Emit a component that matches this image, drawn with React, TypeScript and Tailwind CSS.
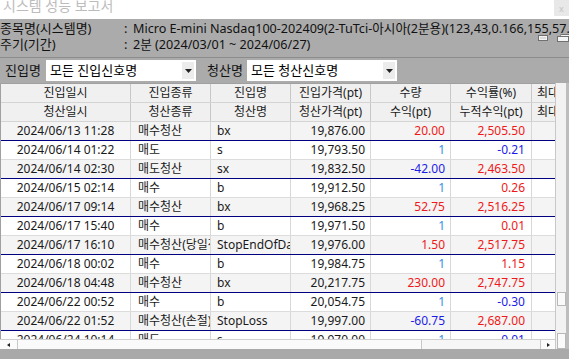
import React from "react";

type Row = {
  d: string;
  k: string;
  n: string;
  p: string;
  q: string;
  r: string;
  exit: boolean;
  qc: string;
  rc: string;
};

const R = "text-[#f01818]";
const B = "text-[#1c1ce8]";
const Q = "text-[#3a8ee6]";

const rows: Row[] = [
  { d: "2024/06/13 11:28", k: "매수청산", n: "bx", p: "19,876.00", q: "20.00", r: "2,505.50", exit: true, qc: R, rc: R },
  { d: "2024/06/14 01:22", k: "매도", n: "s", p: "19,793.50", q: "1", r: "-0.21", exit: false, qc: Q, rc: B },
  { d: "2024/06/14 02:30", k: "매도청산", n: "sx", p: "19,832.50", q: "-42.00", r: "2,463.50", exit: true, qc: B, rc: R },
  { d: "2024/06/15 02:14", k: "매수", n: "b", p: "19,912.50", q: "1", r: "0.26", exit: false, qc: Q, rc: R },
  { d: "2024/06/17 09:14", k: "매수청산", n: "bx", p: "19,968.25", q: "52.75", r: "2,516.25", exit: true, qc: R, rc: R },
  { d: "2024/06/17 15:40", k: "매수", n: "b", p: "19,971.50", q: "1", r: "0.01", exit: false, qc: Q, rc: R },
  { d: "2024/06/17 16:10", k: "매수청산(당일청산)", n: "StopEndOfDay", p: "19,976.00", q: "1.50", r: "2,517.75", exit: true, qc: R, rc: R },
  { d: "2024/06/18 00:02", k: "매수", n: "b", p: "19,984.75", q: "1", r: "1.15", exit: false, qc: Q, rc: R },
  { d: "2024/06/18 04:48", k: "매수청산", n: "bx", p: "20,217.75", q: "230.00", r: "2,747.75", exit: true, qc: R, rc: R },
  { d: "2024/06/22 00:52", k: "매수", n: "b", p: "20,054.75", q: "1", r: "-0.30", exit: false, qc: Q, rc: B },
  { d: "2024/06/22 01:52", k: "매수청산(손절)", n: "StopLoss", p: "19,997.00", q: "-60.75", r: "2,687.00", exit: true, qc: B, rc: R },
  { d: "2024/06/24 10:14", k: "매도", n: "s", p: "19,970.00", q: "1", r: "-0.01", exit: false, qc: Q, rc: B },
];

function HeaderRow({ labels }: { labels: string[] }) {
  return (
    <div className="flex h-[19px] shrink-0 border-b border-[#d4d4d4] bg-[#f0f0f0] text-[#1a1a1a]">
      <div className="w-[130px] shrink-0 border-r border-[#c8c8c8] text-center leading-[18px]">{labels[0]}</div>
      <div className="w-[80px] shrink-0 border-r border-[#c8c8c8] text-center leading-[18px]">{labels[1]}</div>
      <div className="w-[80px] shrink-0 border-r border-[#c8c8c8] text-center leading-[18px]">{labels[2]}</div>
      <div className="w-[80px] shrink-0 border-r border-[#c8c8c8] text-center leading-[18px]">{labels[3]}</div>
      <div className="w-[80px] shrink-0 border-r border-[#c8c8c8] text-center leading-[18px]">{labels[4]}</div>
      <div className="w-[81px] shrink-0 border-r border-[#c8c8c8] text-center leading-[18px]">{labels[5]}</div>
      <div className="w-[60px] shrink-0 overflow-hidden whitespace-nowrap pl-[5px] leading-[18px]">{labels[6]}</div>
    </div>
  );
}

function DataRow({ row }: { row: Row }) {
  return (
    <div
      className={`flex h-[19px] shrink-0 border-b ${
        row.exit ? "bg-[#f4f4f4] border-[#000080]" : "bg-white border-[#dcdcdc]"
      } text-[#1a1a1a]`}
    >
      <div className="w-[130px] shrink-0 border-r border-[#d8d8d8] text-center leading-[18px] whitespace-nowrap">{row.d}</div>
      <div className="w-[80px] shrink-0 border-r border-[#d8d8d8] pl-[7px] leading-[18px] whitespace-nowrap overflow-hidden">{row.k}</div>
      <div className="w-[80px] shrink-0 border-r border-[#d8d8d8] pl-[6px] leading-[18px] whitespace-nowrap overflow-hidden">{row.n}</div>
      <div className="w-[80px] shrink-0 border-r border-[#d8d8d8] pr-[5px] text-right leading-[18px] whitespace-nowrap">{row.p}</div>
      <div className={`w-[80px] shrink-0 border-r border-[#d8d8d8] pr-[5px] text-right leading-[18px] whitespace-nowrap ${row.qc}`}>{row.q}</div>
      <div className={`w-[81px] shrink-0 border-r border-[#d8d8d8] pr-[6px] text-right leading-[18px] whitespace-nowrap ${row.rc}`}>{row.r}</div>
      <div className="w-[60px] shrink-0" />
    </div>
  );
}

function Combo({ text }: { text: string }) {
  return (
    <div className="flex h-[21px] w-[150px] items-center justify-between bg-white pl-[4px] pr-[2px]">
      <span className="text-[13px] leading-none text-black whitespace-nowrap">{text}</span>
      <span className="flex h-[17px] w-[12px] items-center justify-center bg-[#ececec]">
        <svg width="7" height="4" viewBox="0 0 7 4">
          <path d="M0 0 H7 L3.5 4 Z" fill="#222" />
        </svg>
      </span>
    </div>
  );
}

export default function App() {
  return (
    <div className="relative flex h-[359px] w-[569px] flex-col overflow-hidden bg-[#a9a9a9] font-['Noto_Sans','Noto_Sans_CJK_KR',sans-serif] text-[12px]">
      {/* title bar */}
      <div className="flex h-[19px] shrink-0 items-start justify-between overflow-hidden bg-white">
        <span className="-mt-[1px] pl-[3px] text-[14px] leading-[14px] text-[#bcbcbc] whitespace-nowrap">시스템 성능 보고서</span>
        <span className="flex h-[16px] w-[15px] items-center justify-center bg-[#e8e8e8] text-[9px] leading-none text-[#c4c4c4]">x</span>
      </div>

      {/* info */}
      <div className="relative h-[39px] shrink-0 overflow-hidden border-b border-[#8c8c8c] bg-[#ababab] pt-[2px] text-[13px] text-[#111]">
        <div className="flex h-[16px] items-center whitespace-nowrap">
          <span className="w-[124px] shrink-0">종목명(시스템명)</span>
          <span className="w-[9px] shrink-0">:</span>
          <span className="text-[12.6px]">Micro E-mini Nasdaq100-202409(2-TuTci-아시아(2분용)(123,43,0.166,155,57.75,0)</span>
        </div>
        <div className="flex h-[16px] items-center whitespace-nowrap">
          <span className="w-[124px] shrink-0">주기(기간)</span>
          <span className="w-[9px] shrink-0">:</span>
          <span className="text-[12.6px]">2분 (2024/03/01 ~ 2024/06/27)</span>
        </div>
        <div className="absolute right-0 top-[15px] flex items-center gap-[9px]">
          <svg width="10" height="6" viewBox="0 0 10 6">
            <rect x="0.5" y="0.5" width="9" height="5" fill="#f4f4f4" stroke="#707070" />
            <rect x="2" y="2" width="6" height="2" fill="#dcdcdc" />
          </svg>
          <svg width="12" height="8" viewBox="0 0 12 8">
            <rect x="0.5" y="2.5" width="11" height="5" fill="#f4f4f4" stroke="#707070" />
            <rect x="4" y="0.5" width="8" height="2" fill="#f4f4f4" stroke="#707070" />
          </svg>
        </div>
      </div>

      {/* filter bar */}
      <div className="flex h-[25px] shrink-0 items-start bg-[#ababab] pt-[2px] text-[13px] text-[#111]">
        <span className="w-[46px] shrink-0 pl-[5px] leading-[21px]">진입명</span>
        <Combo text="모든 진입신호명" />
        <span className="w-[51px] shrink-0 pl-[11px] leading-[21px]">청산명</span>
        <Combo text="모든 청산신호명" />
      </div>

      {/* table + scrollbars */}
      <div className="flex h-[266px] shrink-0">
        <div className="flex w-[555px] shrink-0 flex-col">
          <div className="flex h-[256px] flex-col overflow-hidden border-l border-t border-[#a0a0a0] bg-white">
            <HeaderRow labels={["진입일시", "진입종류", "진입명", "진입가격(pt)", "수량", "수익률(%)", "최대수익(pt)"]} />
            <HeaderRow labels={["청산일시", "청산종류", "청산명", "청산가격(pt)", "수익(pt)", "누적수익(pt)", "최대손실(pt)"]} />
            {rows.map((r, i) => (
              <DataRow key={i} row={r} />
            ))}
          </div>
          {/* horizontal scrollbar */}
          <div className="flex h-[10px] shrink-0 border-t border-[#cfcfcf] bg-[#f6f6f6]">
            <div className="flex w-[18px] items-center justify-center border-r border-[#c8c8c8] bg-[#fbfbfb]">
              <svg width="3" height="4" viewBox="0 0 3 4">
                <path d="M3 0 V4 L0 2 Z" fill="#222" />
              </svg>
            </div>
            <div className="w-[404px] border-r border-[#c8c8c8] bg-[#fafafa]" />
            <div className="flex-1" />
            <div className="flex w-[15px] items-center justify-center border-l border-[#c8c8c8] bg-[#fbfbfb]">
              <svg width="3" height="4" viewBox="0 0 3 4">
                <path d="M0 0 V4 L3 2 Z" fill="#222" />
              </svg>
            </div>
          </div>
        </div>
        {/* vertical scrollbar */}
        <div className="relative w-[11px] shrink-0 border-l border-[#c8c8c8] bg-[#f2f2f2]">
          <div className="absolute left-[1px] top-[209px] h-[14px] w-[9px] border border-[#b8b8b8] bg-[#fafafa]" />
          <div className="absolute left-[1px] top-[250px] h-[16px] w-[9px] border border-[#b8b8b8] bg-[#fafafa]" />
        </div>
        <div className="w-[3px] shrink-0 bg-[#bdbdbd]" />
      </div>
    </div>
  );
}
